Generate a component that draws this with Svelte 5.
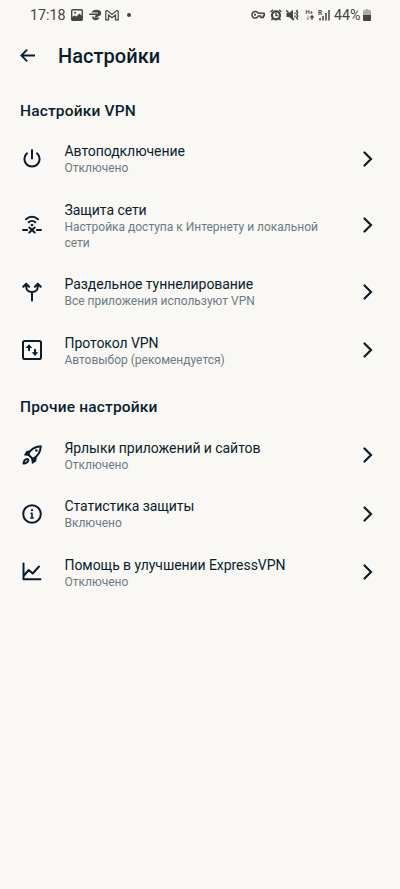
<script lang="ts">
  interface SettingItem {
    icon: string;
    title: string;
    subtitle: string;
  }

  interface SettingSection {
    heading: string;
    items: SettingItem[];
  }

  const sections: SettingSection[] = [
    {
      heading: 'Настройки VPN',
      items: [
        { icon: 'power', title: 'Автоподключение', subtitle: 'Отключено' },
        {
          icon: 'network',
          title: 'Защита сети',
          subtitle: 'Настройка доступа к Интернету и локальной сети'
        },
        {
          icon: 'split',
          title: 'Раздельное туннелирование',
          subtitle: 'Все приложения используют VPN'
        },
        { icon: 'protocol', title: 'Протокол VPN', subtitle: 'Автовыбор (рекомендуется)' }
      ]
    },
    {
      heading: 'Прочие настройки',
      items: [
        { icon: 'rocket', title: 'Ярлыки приложений и сайтов', subtitle: 'Отключено' },
        { icon: 'info', title: 'Статистика защиты', subtitle: 'Включено' },
        { icon: 'chart', title: 'Помощь в улучшении ExpressVPN', subtitle: 'Отключено' }
      ]
    }
  ];
</script>

<div class="screen">
  <div class="status-bar">
    <div class="status-left">
      <span class="clock">17:18</span>
      <svg width="12" height="12" viewBox="0 0 12 12">
        <rect x="0.7" y="0.7" width="10.6" height="10.6" rx="1" fill="none" stroke="currentColor" stroke-width="1.4" />
        <path d="M1 11V8l2.500-1.500 2 1L8.500 4.500 11 7v4z" fill="currentColor" />
        <circle cx="4" cy="3.800" r="1" fill="currentColor" />
      </svg>
      <svg class="express" width="13" height="12" viewBox="0 0 13 12">
        <path d="M2.500 3.500C3.300 1.600 5 .8 7.500.8c3 0 4.700 1.300 4.700 3.500 0 1.900-1.300 3-3.400 3.100l-.6 1.200H5.500L6.700 6H0l.4-1.500h8.300l.4-1z" fill="currentColor" />
        <path d="M3 7.500h1.500c.3 1.300 1.500 1.500 3 1.300l3-.3C9.700 10.300 8.500 11.200 6.500 11.200 4.500 11.200 3 9.700 3 7.500z" fill="currentColor" />
      </svg>
      <svg class="mail" width="14" height="11" viewBox="0 0 14 11">
        <path d="M.8 9.800V1.500C.8.6 2.200.4 3 1.100l4 3.300 4-3.300c.8-.7 2.200-.5 2.200.4v8.300h-2.700V5L7 7.700 3.500 5v4.800z" fill="none" stroke="currentColor" stroke-width="1.200" />
      </svg>
      <span class="dot"></span>
    </div>
    <div class="status-right">
      <svg width="14" height="10" viewBox="0 0 14 10">
        <path d="M7.200 3.300H13.300V5.800H12.300V7.600H9.700V6.100H7.200A3.300 3.300 0 1 1 7.200 3.300z" fill="none" stroke="currentColor" stroke-width="1.500" stroke-linejoin="round" />
        <circle cx="4" cy="4.700" r="1.100" fill="currentColor" />
      </svg>
      <svg class="alarm" width="12" height="12" viewBox="0 0 12 12">
        <circle cx="6" cy="6.300" r="4" fill="none" stroke="currentColor" stroke-width="2.200" />
        <path d="M6 4v2.600h2M.6 3 3 .9M11.400 3 9 .9M2.700 9.500l-1.200 1.700M9.300 9.500l1.200 1.700" fill="none" stroke="currentColor" stroke-width="1.400" />
      </svg>
      <svg class="mute" width="13" height="12" viewBox="0 0 13 12">
        <path d="M.5 4h2.500l4-3.300v10.600L3 8H.5z" fill="currentColor" />
        <path d="M.3 1.200 8 11" stroke="currentColor" stroke-width="1.500" />
        <path d="M9 3.500v1.600M9 6.500v2M11.500.8l-.8 1.400 1 1.600-1 1.600 1 1.600-1 1.600 1 2" fill="none" stroke="currentColor" stroke-width="1.400" />
      </svg>
      <svg class="data" width="10" height="12" viewBox="0 0 10 12">
        <text x="0.500" y="5" font-size="6" font-weight="700" fill="currentColor">H+</text>
        <path d="M3 6.500v4M1.500 9 3 10.700 4.500 9" fill="none" stroke="#999894" stroke-width="1" />
        <path d="M7 11V7M5.300 8.600 7 6.700l1.700 1.900" fill="none" stroke="currentColor" stroke-width="1.300" />
      </svg>
      <svg class="signal" width="12" height="13" viewBox="0 0 12 13">
        <text x="0" y="5.500" font-size="6.500" font-weight="700" fill="currentColor">R</text>
        <path d="M2 11.500V9M5 11.500V7M8 11.500V4M11 11.500V1" stroke="currentColor" stroke-width="1.500" />
      </svg>
      <span class="percent">44%</span>
      <svg class="battery" width="8" height="12" viewBox="0 0 8 12">
        <path d="M2.500 0h3v1.200H7q1 0 1 1V6H0V2.200q0-1 1-1h1.500z" fill="#aaa9a6" />
        <path d="M0 6h8v5q0 1-1 1H1q-1 0-1-1z" fill="currentColor" />
      </svg>
    </div>
  </div>

  <header class="app-bar">
    <svg class="back" width="16" height="14" viewBox="0 0 16 14">
      <path d="M15 6.500H1.600M7.200.6 1.300 6.500l5.900 5.900" />
    </svg>
    <h1>Настройки</h1>
  </header>

  {#each sections as section}
    <section>
      <h2>{section.heading}</h2>
      {#each section.items as item}
        <div class="row">
          <svg class="row-icon" width="20" height="20" viewBox="0 0 20 20">
            {#if item.icon === 'power'}
              <path d="M10 1v8.500M5 4.300a7.600 7.600 0 1 0 10 0" />
            {:else if item.icon === 'network'}
              <path d="M4 4.400a8.300 8.300 0 0 1 12 0M6.700 7.300a4.800 4.800 0 0 1 6.600 0M1 15h4.200M14.800 15H19M7.300 12.500l5.400 5M12.700 12.500l-5.400 5" />
              <circle class="solid" cx="10" cy="10" r="1.300" />
            {:else if item.icon === 'split'}
              <path d="M10 18.500v-8M4.200 2.500V4.500c0 3.500 2.300 5.500 5.800 5.500s5.800-2 5.800-5.500V2.500M1.300 4.800 4.200 1.800l2.900 3M12.900 4.800l2.900-3 2.900 3" />
            {:else if item.icon === 'protocol'}
              <rect x="1" y="1" width="18" height="18" rx="1.800" />
              <path d="M7 10.200V6M13 9.800v4" />
              <path class="solid" d="M3.700 8 7 4.300 10.300 8zM9.700 12.200 13 15.900l3.300-3.700z" />
            {:else if item.icon === 'rocket'}
              <path d="M6 9.200C8.200 4.800 12 1.800 18.800 1.200c-.4 6.500-3.500 10.400-8 12.800z" />
              <path class="solid" d="M9 5.200 4.500 6 1.800 10.300l5 .7zM14.800 11.200l-.5 5-4.300 2.900-.8-5z" />
              <path d="M5.400 14c-2.400.2-3.600 1.500-3.900 4.500 3-.2 4.400-1.200 4.900-3.500z" />
              <circle class="solid" cx="14.400" cy="5.500" r="1.300" />
            {:else if item.icon === 'info'}
              <circle cx="10" cy="10" r="8.800" />
              <path class="thin" d="M9.200 9.200H10V14M8.800 14h2.400" />
              <circle class="solid" cx="10" cy="6.200" r="1.100" />
            {:else}
              <path d="M1.500 1.500v15.700h17M2 13.500l4.700-5.500 4 3.500L17 4.500" />
            {/if}
          </svg>
          <div class="row-text">
            <div class="row-title">{item.title}</div>
            <div class="row-subtitle">{item.subtitle}</div>
          </div>
          <svg class="chevron" width="10" height="16" viewBox="0 0 10 16">
            <path d="M1.500 1.500 8 8l-6.500 6.500" />
          </svg>
        </div>
      {/each}
    </section>
  {/each}
</div>

<style>
  :global(body) {
    background: #f9f8f4;
  }

  .screen {
    min-height: 889px;
    background: #f9f8f4;
    color: #0b1d2c;
    font-family: Roboto, 'Liberation Sans', sans-serif;
  }

  .status-bar {
    display: flex;
    align-items: center;
    justify-content: space-between;
    box-sizing: border-box;
    height: 30px;
    padding: 0 29px 0 30px;
    color: #454542;
  }

  .status-left,
  .status-right {
    display: flex;
    align-items: center;
  }

  .clock,
  .percent {
    padding-top: 1px;
    font-size: 14.3px;
    line-height: 29px;
  }

  .clock {
    width: 36px;
    margin-right: 5px;
  }

  .express {
    margin-left: 6px;
  }

  .mail {
    margin-left: 3px;
  }

  .dot {
    width: 4px;
    height: 4px;
    margin-left: 8px;
    border-radius: 50%;
    background: currentColor;
  }

  .alarm {
    margin-left: 5px;
  }

  .mute {
    margin-left: 4px;
  }

  .data {
    margin-left: 6px;
  }

  .signal {
    margin-left: 3px;
  }

  .percent {
    margin-left: 4px;
  }

  .battery {
    margin-left: 2.5px;
  }

  .app-bar {
    display: flex;
    align-items: center;
    gap: 22px;
    height: 52.75px;
    padding-left: 20px;
  }

  svg {
    flex: none;
  }

  .back path,
  .chevron path {
    fill: none;
    stroke: #0b1d2c;
    stroke-width: 1.8;
  }

  h1,
  h2 {
    margin: 0;
    font-weight: 500;
  }

  h1 {
    font-size: 20px;
    line-height: 28px;
    letter-spacing: 0.05px;
  }

  h2 {
    box-sizing: border-box;
    height: 46.5px;
    padding: 18px 20px 0;
    font-size: 15.5px;
    line-height: 20px;
    letter-spacing: 0.17px;
  }

  .row {
    display: flex;
    align-items: center;
    padding: 12.25px 27px 12.25px 22px;
  }

  .row-icon {
    margin-right: 22.5px;
    fill: none;
    stroke: #0b1d2c;
    stroke-width: 2;
    stroke-linecap: round;
    stroke-linejoin: round;
  }

  .row-icon .solid {
    fill: #0b1d2c;
    stroke: none;
  }

  .row-icon .thin {
    stroke-width: 1.6;
  }

  .row-text {
    flex: 1;
    padding: 0.5px 30px 0 0;
    margin-bottom: -0.5px;
  }

  .row-title {
    font-size: 14px;
    line-height: 18px;
    letter-spacing: -0.06px;
  }

  .row-subtitle {
    color: #6c7a83;
    font-size: 12px;
    line-height: 16px;
    letter-spacing: -0.01px;
  }

  .chevron path {
    stroke-width: 2.2;
    stroke-linecap: round;
  }
</style>
